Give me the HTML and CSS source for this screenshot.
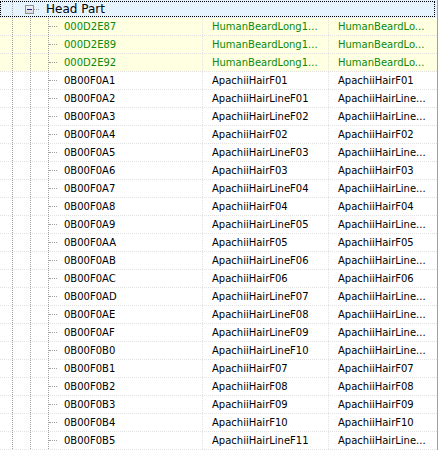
FILE: index.html
```html
<!DOCTYPE html>
<html>
<head>
<meta charset="utf-8">
<link rel="stylesheet" href="styles.css">
</head>
<body>
<div class="tree">
  <div class="row head">
    <div class="cell c1"><span class="box"></span><span class="hconn"></span><span class="label">Head Part</span></div>
    <div class="cell c2"></div>
    <div class="cell c3"></div>
  </div>
  <div class="row mark"><div class="cell c1"><span class="conn"></span><span class="label">000D2E87</span></div><div class="cell c2">HumanBeardLong1...</div><div class="cell c3">HumanBeardLo...</div></div>
  <div class="row mark"><div class="cell c1"><span class="conn"></span><span class="label">000D2E89</span></div><div class="cell c2">HumanBeardLong1...</div><div class="cell c3">HumanBeardLo...</div></div>
  <div class="row mark"><div class="cell c1"><span class="conn"></span><span class="label">000D2E92</span></div><div class="cell c2">HumanBeardLong1...</div><div class="cell c3">HumanBeardLo...</div></div>
  <div class="row"><div class="cell c1"><span class="conn"></span><span class="label">0B00F0A1</span></div><div class="cell c2">ApachiiHairF01</div><div class="cell c3">ApachiiHairF01</div></div>
  <div class="row"><div class="cell c1"><span class="conn"></span><span class="label">0B00F0A2</span></div><div class="cell c2">ApachiiHairLineF01</div><div class="cell c3">ApachiiHairLine...</div></div>
  <div class="row"><div class="cell c1"><span class="conn"></span><span class="label">0B00F0A3</span></div><div class="cell c2">ApachiiHairLineF02</div><div class="cell c3">ApachiiHairLine...</div></div>
  <div class="row"><div class="cell c1"><span class="conn"></span><span class="label">0B00F0A4</span></div><div class="cell c2">ApachiiHairF02</div><div class="cell c3">ApachiiHairF02</div></div>
  <div class="row"><div class="cell c1"><span class="conn"></span><span class="label">0B00F0A5</span></div><div class="cell c2">ApachiiHairLineF03</div><div class="cell c3">ApachiiHairLine...</div></div>
  <div class="row"><div class="cell c1"><span class="conn"></span><span class="label">0B00F0A6</span></div><div class="cell c2">ApachiiHairF03</div><div class="cell c3">ApachiiHairF03</div></div>
  <div class="row"><div class="cell c1"><span class="conn"></span><span class="label">0B00F0A7</span></div><div class="cell c2">ApachiiHairLineF04</div><div class="cell c3">ApachiiHairLine...</div></div>
  <div class="row"><div class="cell c1"><span class="conn"></span><span class="label">0B00F0A8</span></div><div class="cell c2">ApachiiHairF04</div><div class="cell c3">ApachiiHairF04</div></div>
  <div class="row"><div class="cell c1"><span class="conn"></span><span class="label">0B00F0A9</span></div><div class="cell c2">ApachiiHairLineF05</div><div class="cell c3">ApachiiHairLine...</div></div>
  <div class="row"><div class="cell c1"><span class="conn"></span><span class="label">0B00F0AA</span></div><div class="cell c2">ApachiiHairF05</div><div class="cell c3">ApachiiHairF05</div></div>
  <div class="row"><div class="cell c1"><span class="conn"></span><span class="label">0B00F0AB</span></div><div class="cell c2">ApachiiHairLineF06</div><div class="cell c3">ApachiiHairLine...</div></div>
  <div class="row"><div class="cell c1"><span class="conn"></span><span class="label">0B00F0AC</span></div><div class="cell c2">ApachiiHairF06</div><div class="cell c3">ApachiiHairF06</div></div>
  <div class="row"><div class="cell c1"><span class="conn"></span><span class="label">0B00F0AD</span></div><div class="cell c2">ApachiiHairLineF07</div><div class="cell c3">ApachiiHairLine...</div></div>
  <div class="row"><div class="cell c1"><span class="conn"></span><span class="label">0B00F0AE</span></div><div class="cell c2">ApachiiHairLineF08</div><div class="cell c3">ApachiiHairLine...</div></div>
  <div class="row"><div class="cell c1"><span class="conn"></span><span class="label">0B00F0AF</span></div><div class="cell c2">ApachiiHairLineF09</div><div class="cell c3">ApachiiHairLine...</div></div>
  <div class="row"><div class="cell c1"><span class="conn"></span><span class="label">0B00F0B0</span></div><div class="cell c2">ApachiiHairLineF10</div><div class="cell c3">ApachiiHairLine...</div></div>
  <div class="row"><div class="cell c1"><span class="conn"></span><span class="label">0B00F0B1</span></div><div class="cell c2">ApachiiHairF07</div><div class="cell c3">ApachiiHairF07</div></div>
  <div class="row"><div class="cell c1"><span class="conn"></span><span class="label">0B00F0B2</span></div><div class="cell c2">ApachiiHairF08</div><div class="cell c3">ApachiiHairF08</div></div>
  <div class="row"><div class="cell c1"><span class="conn"></span><span class="label">0B00F0B3</span></div><div class="cell c2">ApachiiHairF09</div><div class="cell c3">ApachiiHairF09</div></div>
  <div class="row"><div class="cell c1"><span class="conn"></span><span class="label">0B00F0B4</span></div><div class="cell c2">ApachiiHairF10</div><div class="cell c3">ApachiiHairF10</div></div>
  <div class="row"><div class="cell c1"><span class="conn"></span><span class="label">0B00F0B5</span></div><div class="cell c2">ApachiiHairLineF11</div><div class="cell c3">ApachiiHairLine...</div></div>
</div>
</body>
</html>
```

FILE: styles.css
```css
html, body {
  margin: 0;
  padding: 0;
  background: #ffffff;
}
body {
  font-family: "DejaVu Sans", Verdana, sans-serif;
  font-size: 10px;
  color: #000;
  overflow: hidden;
  height: 450px;
}
.tree {
  width: 437px;
  border-right: 1px solid #a0a0a0;
  background: #fff;
  height: 450px;
}
.row {
  display: grid;
  grid-template-columns: 202px 126px 1fr;
  height: 18px;
  box-sizing: border-box;
  border-bottom: 1px dotted #e2e2e2;
  position: relative;
}
.cell {
  display: flex;
  align-items: center;
  white-space: nowrap;
  overflow: hidden;
  line-height: 17px;
}
.c2, .c3 {
  border-left: 1px dotted #e2e2e2;
  padding-left: 9px;
}
.c1 {
  background-image:
    linear-gradient(#a0a0a0 50%, transparent 50%),
    linear-gradient(#a0a0a0 50%, transparent 50%),
    linear-gradient(#a0a0a0 50%, transparent 50%);
  background-size: 1px 2px;
  background-repeat: repeat-y;
  background-position: 12px 0, 30px 0, 48px 0;
}
.conn {
  width: 8px;
  margin-left: 49px;
  margin-right: 7px;
  height: 0;
  border-top: 1px dotted #a0a0a0;
}
.mark {
  background: #ffffe1;
  color: #0a8a0a;
}
.head {
  background: #e5f3ff;
  border-bottom: none;
}
.head::after {
  content: "";
  position: absolute;
  left: 0;
  top: 1px;
  width: 435px;
  height: 16px;
  box-sizing: border-box;
  border: 1px dotted #000;
  pointer-events: none;
}
.head .c1 {
  background-image:
    linear-gradient(#a0a0a0 50%, transparent 50%);
  background-position: 12px 0;
}
.head .c2, .head .c3 {
  border-left: none;
}
.box {
  width: 9px;
  height: 9px;
  box-sizing: border-box;
  border: 1px solid #919191;
  background: linear-gradient(#f4f4f4, #d8d8d8);
  margin-left: 25px;
  position: relative;
}
.box::before {
  content: "";
  position: absolute;
  left: 1px;
  top: 3px;
  width: 5px;
  height: 1px;
  background: #1a1a8a;
}
.hconn {
  width: 5px;
  height: 0;
  border-top: 1px dotted #a0a0a0;
  margin-right: 7px;
}
.head .label {
  font-size: 12px;
}
```
